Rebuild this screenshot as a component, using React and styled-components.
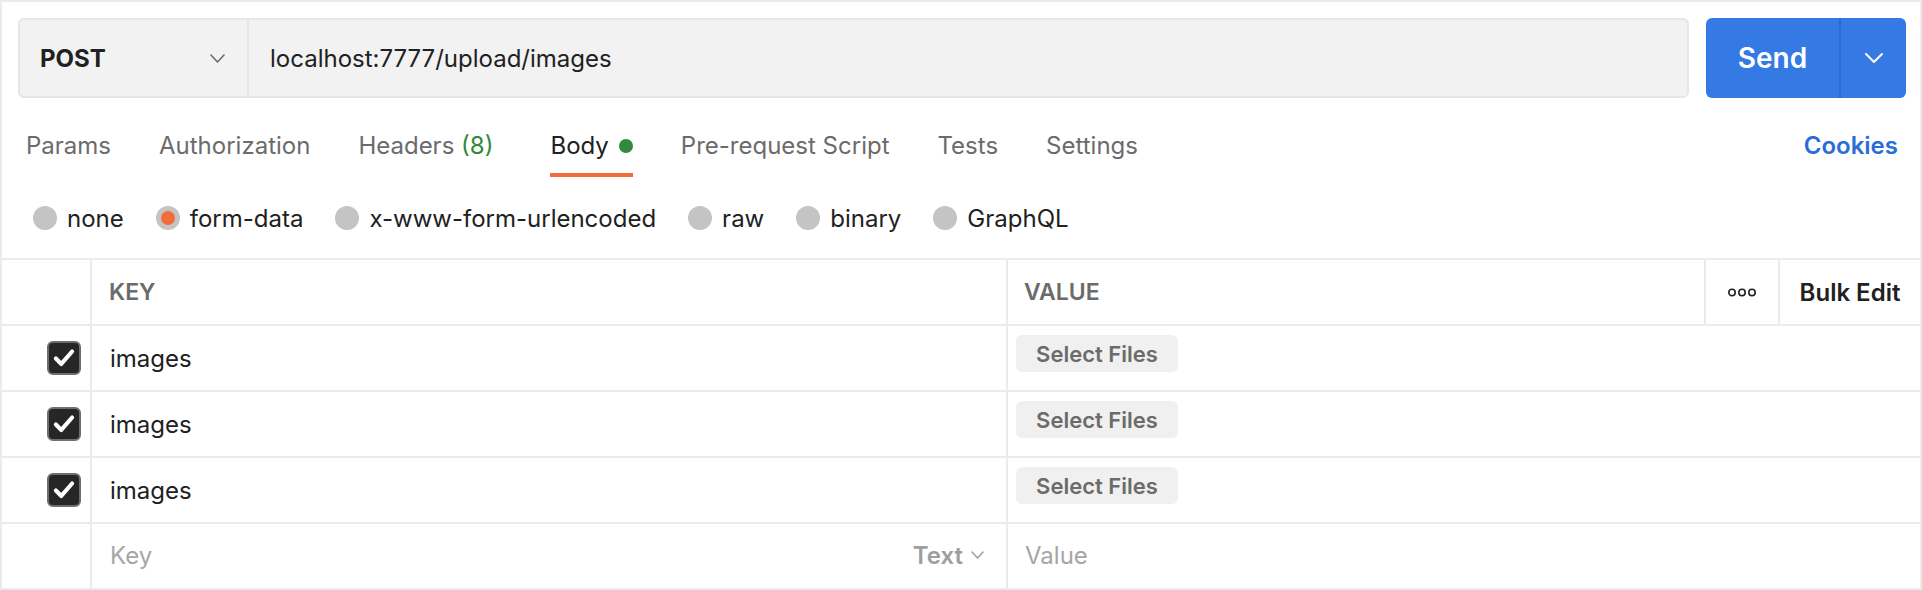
import React from "react";
import styled, { createGlobalStyle } from "styled-components";

const GlobalStyle = createGlobalStyle`
  body {
    margin: 0;
    background: #ffffff;
  }
`;

const Frame = styled.div`
  width: 1922px;
  height: 590px;
  box-sizing: border-box;
  border: 2px solid #ebebeb;
  background: #ffffff;
  display: flex;
  flex-direction: column;
  overflow: hidden;
  font-family: Inter, "Noto Sans", "Liberation Sans", sans-serif;
  color: #212121;
`;

const RequestRow = styled.div`
  display: flex;
  gap: 17px;
  padding: 16px 14px 0 16px;
`;

const UrlBar = styled.div`
  flex: 1;
  height: 80px;
  box-sizing: border-box;
  border: 2px solid #e6e6e6;
  border-radius: 6px;
  background: #f2f2f2;
  display: flex;
`;

const MethodSelect = styled.div`
  width: 229px;
  box-sizing: border-box;
  border-right: 2px solid #e6e6e6;
  display: flex;
  align-items: center;
  justify-content: space-between;
  padding: 0 22px 0 20px;
  font-size: 24px;
  font-weight: 700;
  color: #212121;
`;

const UrlText = styled.div`
  display: flex;
  align-items: center;
  padding-left: 21px;
  font-size: 24px;
  color: #212121;
`;

const SendGroup = styled.div`
  width: 200px;
  height: 80px;
  border-radius: 6px;
  background: #3579e5;
  display: flex;
  overflow: hidden;
`;

const SendMain = styled.div`
  width: 135px;
  box-sizing: border-box;
  border-right: 2px solid #2d6bd0;
  display: flex;
  align-items: center;
  justify-content: center;
  font-size: 28px;
  font-weight: 600;
  color: #ffffff;
`;

const SendArrow = styled.div`
  flex: 1;
  display: flex;
  align-items: center;
  justify-content: center;
`;

const TabsRow = styled.div`
  display: flex;
  gap: 48px;
  padding: 0 22px 0 24px;
`;

const Tab = styled.div`
  display: flex;
  align-items: center;
  gap: 10px;
  margin-left: ${(p) => p.$shift || 0}px;
  padding: 33px 0 12px;
  line-height: 30px;
  font-size: 24px;
  color: ${(p) => (p.$active ? "#212121" : "#6b6b6b")};
  border-bottom: 4px solid ${(p) => (p.$active ? "#f26b3a" : "transparent")};
`;

const CookiesLink = styled(Tab)`
  margin-left: auto;
  font-weight: 600;
  color: #2a6dd8;
`;

const Count = styled.span`
  color: #2f8a3c;
`;

const Dot = styled.span`
  width: 14px;
  height: 14px;
  border-radius: 50%;
  background: #2f8a3c;
`;

const RadioRow = styled.div`
  display: flex;
  align-items: center;
  gap: 32px;
  height: 42px;
  margin-top: 20px;
  padding-left: 31px;
`;

const RadioItem = styled.label`
  display: flex;
  align-items: center;
  gap: 10px;
  font-size: 24px;
  color: #212121;
`;

const RadioCircle = styled.span`
  width: 24px;
  height: 24px;
  border-radius: 50%;
  background: #c4c4c4;
  display: flex;
  align-items: center;
  justify-content: center;

  &::after {
    content: "";
    width: 14px;
    height: 14px;
    border-radius: 50%;
    background: ${(p) => (p.$checked ? "#f26b3a" : "transparent")};
  }
`;

const Table = styled.div`
  margin-top: auto;
  display: flex;
  flex-direction: column;
`;

const Row = styled.div`
  display: grid;
  grid-template-columns: ${(p) => (p.$header ? "90px 916px 698px 74px 1fr" : "90px 916px 1fr")};
  height: 66px;
  box-sizing: border-box;
  border-top: 2px solid #ebebeb;
`;

const Cell = styled.div`
  display: flex;
  align-items: center;
  box-sizing: border-box;
  border-right: 2px solid #ebebeb;
  padding-left: ${(p) => p.$pl || 0}px;
  padding-bottom: ${(p) => (p.$muted ? 2 : 0)}px;
  font-size: 24px;
  color: ${(p) => (p.$muted ? "#a6a6a6" : "#212121")};

  &:last-child {
    border-right: none;
  }
`;

const HeadCell = styled(Cell)`
  font-size: 23px;
  font-weight: 600;
  color: #6b6b6b;
`;

const CheckCell = styled(Cell)`
  justify-content: flex-end;
  padding-right: 9px;
`;

const CenterCell = styled(Cell)`
  justify-content: center;
  font-weight: 600;
  color: #212121;
`;

const ValueCell = styled(Cell)`
  align-items: flex-start;
  padding: 9px 0 0 8px;
`;

const PlaceholderCell = styled(Cell)`
  justify-content: space-between;
  padding: 0 22px 2px 18px;
  color: #a6a6a6;
`;

const TypeSelect = styled.span`
  display: flex;
  align-items: center;
  gap: 8px;
  font-weight: 600;
  color: #9e9e9e;
`;

const Checkbox = styled.span`
  width: 34px;
  height: 34px;
  box-sizing: border-box;
  border: 2px solid #6e6e6e;
  border-radius: 6px;
  background: #262626;
  display: flex;
  align-items: center;
  justify-content: center;
`;

const SelectFiles = styled.button`
  width: 162px;
  height: 37px;
  border: none;
  border-radius: 6px;
  background: #f0f0f0;
  font-family: inherit;
  font-size: 22px;
  font-weight: 600;
  color: #6b6b6b;
  padding: 0;
`;

const Chevron = ({ color = "#6b6b6b", w = 14, h = 8, sw = 1.6 }) => (
  <svg width={w} height={h} viewBox={`0 0 ${w} ${h}`} fill="none">
    <path
      d={`M1 1 L${w / 2} ${h - 1} L${w - 1} 1`}
      stroke={color}
      strokeWidth={sw}
      strokeLinecap="round"
      strokeLinejoin="round"
    />
  </svg>
);

const CheckMark = () => (
  <svg width="26" height="26" viewBox="0 0 24 24" fill="none">
    <path
      d="M4.5 12.5 L9.5 17.5 L19.5 6"
      stroke="#ffffff"
      strokeWidth="3.8"
      strokeLinecap="round"
      strokeLinejoin="round"
    />
  </svg>
);

const DotsIcon = () => (
  <svg width="28" height="9" viewBox="0 0 28 9" fill="none">
    {[4, 14, 24].map((cx) => (
      <circle key={cx} cx={cx} cy="4.5" r="3.2" stroke="#212121" strokeWidth="1.6" />
    ))}
  </svg>
);

const tabs = ["Params", "Authorization", "Headers", "Body", "Pre-request Script", "Tests", "Settings"];
const bodyTypes = ["none", "form-data", "x-www-form-urlencoded", "raw", "binary", "GraphQL"];
const params = ["images", "images", "images"];

export default function App() {
  return (
    <>
      <GlobalStyle />
      <Frame>
        <RequestRow>
          <UrlBar>
            <MethodSelect>
              POST
              <Chevron w={15} h={9} />
            </MethodSelect>
            <UrlText>localhost:7777/upload/images</UrlText>
          </UrlBar>
          <SendGroup>
            <SendMain>Send</SendMain>
            <SendArrow>
              <Chevron color="#ffffff" w={18} h={10} sw={2} />
            </SendArrow>
          </SendGroup>
        </RequestRow>

        <TabsRow>
          {tabs.map((t) => (
            <Tab key={t} $active={t === "Body"} $shift={t === "Body" ? 9 : 0}>
              {t === "Headers" ? (
                <span>
                  Headers <Count>(8)</Count>
                </span>
              ) : (
                t
              )}
              {t === "Body" && <Dot />}
            </Tab>
          ))}
          <CookiesLink>Cookies</CookiesLink>
        </TabsRow>

        <RadioRow>
          {bodyTypes.map((b) => (
            <RadioItem key={b}>
              <RadioCircle $checked={b === "form-data"} />
              {b}
            </RadioItem>
          ))}
        </RadioRow>

        <Table>
          <Row $header>
            <Cell />
            <HeadCell $pl={17}>KEY</HeadCell>
            <HeadCell $pl={16}>VALUE</HeadCell>
            <CenterCell>
              <DotsIcon />
            </CenterCell>
            <CenterCell>Bulk Edit</CenterCell>
          </Row>
          {params.map((p, i) => (
            <Row key={i}>
              <CheckCell>
                <Checkbox>
                  <CheckMark />
                </Checkbox>
              </CheckCell>
              <Cell $pl={18}>{p}</Cell>
              <ValueCell>
                <SelectFiles>Select Files</SelectFiles>
              </ValueCell>
            </Row>
          ))}
          <Row>
            <Cell />
            <PlaceholderCell>
              Key
              <TypeSelect>
                Text
                <Chevron color="#9e9e9e" w={13} h={8} sw={1.5} />
              </TypeSelect>
            </PlaceholderCell>
            <Cell $pl={17} $muted>
              Value
            </Cell>
          </Row>
        </Table>
      </Frame>
    </>
  );
}
